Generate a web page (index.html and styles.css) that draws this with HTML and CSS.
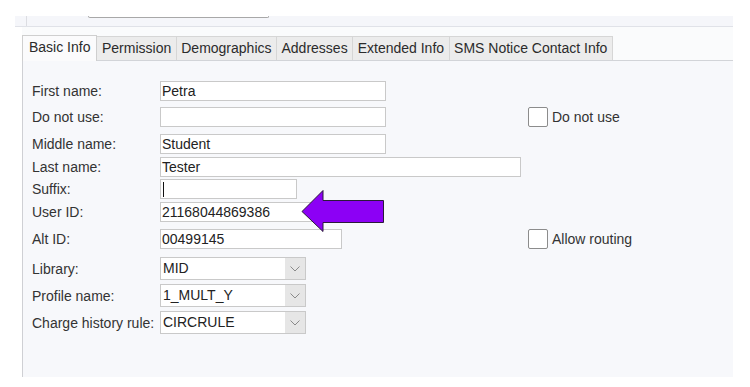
FILE: index.html
```html
<!DOCTYPE html>
<html>
<head>
<meta charset="utf-8">
<link rel="stylesheet" href="styles.css">
</head>
<body>
<div class="topbar">
  <div class="topbar-inner">
    <div class="top-input"></div>
  </div>
</div>
<div class="tabstrip">
  <div class="tab active">Basic Info</div>
  <div class="tab">Permission</div>
  <div class="tab">Demographics</div>
  <div class="tab">Addresses</div>
  <div class="tab">Extended Info</div>
  <div class="tab">SMS Notice Contact Info</div>
</div>
<div class="panel">
  <div class="row r1">
    <div class="label">First name:</div>
    <div class="field w225">Petra</div>
  </div>
  <div class="row r2">
    <div class="label">Do not use:</div>
    <div class="field w225"></div>
    <div class="check c1"><span class="box"></span><span>Do not use</span></div>
  </div>
  <div class="row r3">
    <div class="label">Middle name:</div>
    <div class="field w225">Student</div>
  </div>
  <div class="row r4">
    <div class="label">Last name:</div>
    <div class="field w360">Tester</div>
  </div>
  <div class="row r5">
    <div class="label">Suffix:</div>
    <div class="field w136"><span class="caret"></span></div>
  </div>
  <div class="row r6">
    <div class="label">User ID:</div>
    <div class="field w181">21168044869386</div>
  </div>
  <div class="row r7">
    <div class="label">Alt ID:</div>
    <div class="field w181">00499145</div>
    <div class="check c2"><span class="box"></span><span>Allow routing</span></div>
  </div>
  <div class="row r8">
    <div class="label">Library:</div>
    <div class="select"><span class="select-val">MID</span><span class="select-btn"><svg width="10" height="6" viewBox="0 0 10 6"><polyline points="0.5,0.5 5,5 9.5,0.5" fill="none" stroke="#8a8a8a" stroke-width="1"/></svg></span></div>
  </div>
  <div class="row r9">
    <div class="label">Profile name:</div>
    <div class="select"><span class="select-val">1_MULT_Y</span><span class="select-btn"><svg width="10" height="6" viewBox="0 0 10 6"><polyline points="0.5,0.5 5,5 9.5,0.5" fill="none" stroke="#8a8a8a" stroke-width="1"/></svg></span></div>
  </div>
  <div class="row r10">
    <div class="label">Charge history rule:</div>
    <div class="select"><span class="select-val">CIRCRULE</span><span class="select-btn"><svg width="10" height="6" viewBox="0 0 10 6"><polyline points="0.5,0.5 5,5 9.5,0.5" fill="none" stroke="#8a8a8a" stroke-width="1"/></svg></span></div>
  </div>
  <svg class="arrow" width="84" height="44" viewBox="0 0 84 44"><polygon points="1,22.5 22,1.5 22,11.5 82.5,11.5 82.5,33.5 22,33.5 22,42.5" fill="#8c00f5" stroke="#2a1a3a" stroke-width="1"/></svg>
</div>
</body>
</html>
```
FILE: styles.css
```css
html, body {
  margin: 0;
  padding: 0;
  background: #ffffff;
  font-family: "Liberation Sans", Arial, sans-serif;
  font-size: 14px;
  color: #2b2b2b;
}
.topbar {
  margin-top: 16px;
  margin-left: 15px;
  width: 718px;
  height: 10px;
  background: #f5f6fa;
  border-bottom: 1px solid #e0e2e8;
}
.topbar-inner {
  margin-left: 11px;
  height: 10px;
  border-left: 1px solid #dcdde2;
}
.top-input {
  margin-left: 61px;
  width: 179px;
  height: 1px;
  border: 1px solid #a8a8a8;
  border-top: none;
  border-radius: 0 0 2px 2px;
  background: #fff;
}
.tabstrip {
  margin-left: 22px;
  width: 711px;
  height: 33px;
  background: #fafbfc;
  border-bottom: 1px solid #d2d4d8;
  display: flex;
  align-items: flex-end;
}
.tab {
  box-sizing: border-box;
  height: 24px;
  line-height: 22px;
  padding: 0 4.5px;
  background: #ececec;
  border: 1px solid #d6d6d6;
  border-bottom: none;
  color: #2b2b2b;
  white-space: nowrap;
}
.tab + .tab {
  border-left: none;
}
.tab.active {
  height: 26px;
  line-height: 23px;
  margin-bottom: -1px;
  padding: 0 6px;
  background: #fbfbfc;
  border-color: #cfcfcf;
  border-left: 1px solid #cfcfcf;
}
.panel {
  position: relative;
  margin-left: 22px;
  width: 710px;
  height: 296px;
  padding-top: 20px;
  background: #f7f8fb;
  border-left: 1px solid #cfd0d4;
}
.row {
  display: flex;
  align-items: center;
  height: 20px;
  padding-left: 9px;
}
.r2 { margin-top: 6px; }
.r3 { margin-top: 7px; }
.r4 { margin-top: 3px; }
.r5 { margin-top: 2px; }
.r6 { margin-top: 3px; }
.r7 { margin-top: 7px; }
.r8 { margin-top: 8px; height: 23px; }
.r9 { margin-top: 4px; height: 23px; }
.r10 { margin-top: 4px; height: 23px; }
.label {
  width: 128px;
  flex: none;
  color: #333;
  white-space: nowrap;
}
.field {
  box-sizing: border-box;
  height: 20px;
  line-height: 18px;
  padding-left: 1px;
  border: 1px solid #c9c9c9;
  background: #ffffff;
  color: #222;
  flex: none;
  display: flex;
  align-items: center;
}
.w225 { width: 226px; }
.w360 { width: 361px; }
.w136 { width: 137px; }
.w181 { width: 182px; }
.caret {
  display: block;
  width: 1px;
  height: 15px;
  background: #111;
  margin-left: 1px;
}
.check {
  display: flex;
  align-items: center;
  gap: 4px;
  color: #333;
}
.c1 { margin-left: 142px; }
.c2 { margin-left: 186px; }
.box {
  box-sizing: border-box;
  width: 20px;
  height: 20px;
  border: 1px solid #8c8c8c;
  border-radius: 2px;
  background: #ffffff;
}
.select {
  box-sizing: border-box;
  width: 146px;
  height: 23px;
  border: 1px solid #c9c9c9;
  background: #fff;
  display: flex;
  flex: none;
}
.select-val {
  flex: 1;
  line-height: 21px;
  padding-left: 2px;
  color: #222;
}
.select-btn {
  width: 20px;
  background: #e6e6e6;
  display: flex;
  align-items: center;
  justify-content: center;
}
.arrow {
  position: absolute;
  left: 278px;
  top: 128px;
}
```
